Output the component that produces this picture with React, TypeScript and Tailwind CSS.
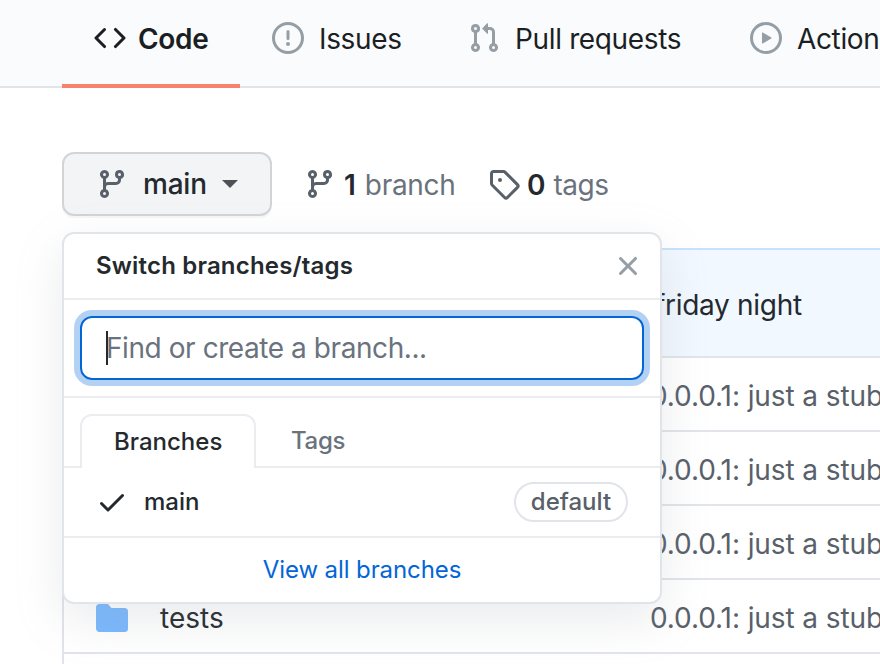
import type { ReactNode } from "react";

const icons = {
  code: "M4.72 3.22a.75.75 0 011.06 1.06L2.06 8l3.72 3.72a.75.75 0 11-1.06 1.06L.47 8.53a.75.75 0 010-1.06l4.25-4.25zm6.56 0a.75.75 0 10-1.06 1.06L13.94 8l-3.72 3.72a.75.75 0 101.06 1.06l4.25-4.25a.75.75 0 000-1.06l-4.25-4.25z",
  issue: "M8 1.5a6.5 6.5 0 100 13 6.5 6.5 0 000-13zM0 8a8 8 0 1116 0A8 8 0 010 8zm9 3a1 1 0 11-2 0 1 1 0 012 0zm-.25-6.25a.75.75 0 00-1.5 0v3.5a.75.75 0 001.5 0v-3.5z",
  pull: "M7.177 3.073L9.573.677A.25.25 0 0110 .854v4.792a.25.25 0 01-.427.177L7.177 3.427a.25.25 0 010-.354zM3.75 2.5a.75.75 0 100 1.5.75.75 0 000-1.5zm-2.25.75a2.25 2.25 0 113 2.122v5.256a2.251 2.251 0 11-1.5 0V5.372A2.25 2.25 0 011.5 3.25zM11 2.5h-1V4h1a1 1 0 011 1v5.628a2.251 2.251 0 101.5 0V5A2.5 2.5 0 0011 2.5zm1 10.25a.75.75 0 111.5 0 .75.75 0 01-1.5 0zM3.75 12a.75.75 0 100 1.5.75.75 0 000-1.5z",
  play: "M1.5 8a6.5 6.5 0 1113 0 6.5 6.5 0 01-13 0zM8 0a8 8 0 100 16A8 8 0 008 0zM6.379 5.227A.25.25 0 006 5.442v5.117a.25.25 0 00.379.214l4.264-2.559a.25.25 0 000-.428L6.379 5.227z",
  branch: "M11.75 2.5a.75.75 0 100 1.5.75.75 0 000-1.5zm-2.25.75a2.25 2.25 0 113 2.122V6A2.5 2.5 0 0110 8.5H6a1 1 0 00-1 1v1.128a2.251 2.251 0 11-1.5 0V5.372a2.25 2.25 0 111.5 0v1.836A2.492 2.492 0 016 7h4a1 1 0 001-1v-.628A2.25 2.25 0 019.5 3.25zM4.25 12a.75.75 0 100 1.5.75.75 0 000-1.5zM3.5 3.25a.75.75 0 111.5 0 .75.75 0 01-1.5 0z",
  tag: "M2.5 7.775V2.75a.25.25 0 01.25-.25h5.025a.25.25 0 01.177.073l6.25 6.25a.25.25 0 010 .354l-5.025 5.025a.25.25 0 01-.354 0l-6.25-6.25a.25.25 0 01-.073-.177zm-1.5 0V2.75C1 1.784 1.784 1 2.75 1h5.025c.464 0 .91.184 1.238.513l6.25 6.25a1.75 1.75 0 010 2.474l-5.026 5.026a1.75 1.75 0 01-2.474 0l-6.25-6.25A1.75 1.75 0 011 7.775zM6 5a1 1 0 100 2 1 1 0 000-2z",
  close: "M3.72 3.72a.75.75 0 011.06 0L8 6.94l3.22-3.22a.75.75 0 111.06 1.06L9.06 8l3.22 3.22a.75.75 0 11-1.06 1.06L8 9.06l-3.22 3.22a.75.75 0 01-1.06-1.06L6.94 8 3.72 4.78a.75.75 0 010-1.06z",
  check: "M13.78 4.22a.75.75 0 010 1.06l-7.25 7.25a.75.75 0 01-1.06 0L2.22 9.28a.75.75 0 011.06-1.06L6 10.94l6.72-6.72a.75.75 0 011.06 0z",
  folder: "M1.75 1A1.75 1.75 0 000 2.75v10.5C0 14.216.784 15 1.75 15h12.5A1.75 1.75 0 0016 13.25v-8.5A1.75 1.75 0 0014.25 3h-6.5a.25.25 0 01-.2-.1l-.9-1.2c-.33-.44-.85-.7-1.4-.7h-3.5z",
};

function Icon({ name, className = "" }: { name: keyof typeof icons; className?: string }) {
  return (
    <svg viewBox="0 0 16 16" className={`size-8 shrink-0 ${className}`} fill="currentColor" fillRule="evenodd" aria-hidden="true">
      <path d={icons[name]} />
    </svg>
  );
}

function NavItem({ icon, className, children }: { icon: keyof typeof icons; className: string; children: ReactNode }) {
  return (
    <a className={`flex h-full shrink-0 items-center pb-2.5 text-[#1b1f23] ${className}`}>
      <Icon name={icon} className="text-[#959da5]" />
      <span className="ml-[15px] pt-px tracking-[-0.35px]">{children}</span>
    </a>
  );
}

function FileRow({ name }: { name?: string }) {
  return (
    <div className="flex h-[74px] items-center border-b-2 border-[#e1e4e8] pt-1 pl-8">
      <Icon name="folder" className="text-[#79b8ff]" />
      <span className="ml-8 w-[490px] shrink-0 text-[#24292e]">{name}</span>
      <span className="tracking-[-0.1px] text-[#586069]">0.0.0.1: just a stub</span>
    </div>
  );
}

function BranchMenu() {
  return (
    <div className="absolute top-[232px] left-[62px] h-[372px] w-[600px] rounded-xl border-2 border-[#e1e4e8] bg-white text-2xl text-[#24292e] shadow-[0_16px_48px_rgba(149,157,165,0.2)]">
      <div className="flex h-[66px] items-center justify-between border-b-2 border-[#eaecef] pr-4 pl-8">
        <span className="font-semibold tracking-[0.18px]">Switch branches/tags</span>
        <Icon name="close" className="text-[#959da5]" />
      </div>
      <div className="h-[98px] border-b-2 border-[#eaecef] p-4">
        <div className="flex h-16 items-center rounded-xl border-2 border-[#0366d6] pl-6 text-[28px] text-[#6a737d] shadow-[0_0_0_6px_rgba(3,102,214,0.3)]">
          <span className="-mr-0.5 h-[34px] w-0.5 bg-[#24292e]" />
          <span className="pt-0.5 tracking-[-0.43px]">Find or create a branch...</span>
        </div>
      </div>
      <div className="flex h-[70px] items-end border-b-2 border-[#eaecef] pl-4 font-medium">
        <div className="-mb-0.5 flex h-[54px] w-44 items-center rounded-t-xl border-2 border-b-0 border-[#eaecef] bg-white pl-8">
          Branches
        </div>
        <div className="flex h-[52px] items-center pt-0.5 pl-[35px] tracking-[-0.3px] text-[#6a737d]">Tags</div>
      </div>
      <div className="flex h-[70px] items-center border-b-2 border-[#eaecef] pr-8 pl-8">
        <Icon name="check" />
        <span className="ml-4 flex-1 font-medium">main</span>
        <span className="flex h-10 w-[114px] items-center justify-center rounded-full border-2 border-[#e1e4e8] font-medium text-[#586069]">
          default
        </span>
      </div>
      <div className="flex h-16 items-center justify-center tracking-[-0.1px] text-[#0366d6]">View all branches</div>
    </div>
  );
}

export default function App() {
  return (
    <div className="relative h-[664px] w-[880px] overflow-hidden bg-white font-['Inter','Liberation_Sans',sans-serif] text-[28px] leading-none whitespace-nowrap">
      <nav className="flex h-[88px] border-b-2 border-[#e1e4e8] bg-[#fafbfc] pl-[62px]">
        <a className="-mb-0.5 flex h-[88px] w-[178px] shrink-0 items-center border-b-4 border-[#f9826c] pb-2 pl-8 font-semibold text-[#1b1f23]">
          <Icon name="code" />
          <span className="ml-3 pt-px tracking-[-0.3px]">Code</span>
        </a>
        <NavItem icon="issue" className="ml-8 w-[196px]">Issues</NavItem>
        <NavItem icon="pull" className="w-[282px]">Pull requests</NavItem>
        <NavItem icon="play" className="">Actions</NavItem>
      </nav>

      <div className="mt-16 flex h-16 items-center pl-[62px] text-[#586069]">
        <button className="flex h-16 w-[210px] items-center rounded-xl border-2 border-[#d2d4d7] bg-[#f3f4f6] pl-8 font-medium text-[#24292e] shadow-[0_2px_0_rgba(27,31,35,0.04)]">
          <Icon name="branch" className="text-[#586069]" />
          <span className="ml-[15px] w-[63px] tracking-[-0.2px]">main</span>
          <span className="ml-4 border-x-8 border-t-8 border-x-transparent border-t-[#4d5156]" />
        </button>
        <div className="ml-8 flex w-[184px] items-center">
          <Icon name="branch" />
          <strong className="ml-2 pt-px font-semibold text-[#24292e]">1</strong>
          <span className="ml-[9px] pt-px tracking-[-0.3px] text-[#6a737d]">branch</span>
        </div>
        <div className="flex items-center">
          <Icon name="tag" />
          <strong className="ml-[7px] pt-px font-semibold text-[#24292e]">0</strong>
          <span className="ml-2 pt-px tracking-[-0.5px] text-[#6a737d]">tags</span>
        </div>
      </div>

      <div className="mt-8 ml-[62px] h-[430px] border-l-2 border-[#e1e4e8]">
        <div className="flex h-[110px] items-center border-t-2 border-b-2 border-t-[#c8e1ff] border-b-[#e1e4e8] bg-[#f1f8ff] pt-[3px] pl-[591px] tracking-[-0.3px] text-[#24292e]">
          friday night
        </div>
        <FileRow />
        <FileRow />
        <FileRow />
        <FileRow name="tests" />
      </div>

      <BranchMenu />
    </div>
  );
}
